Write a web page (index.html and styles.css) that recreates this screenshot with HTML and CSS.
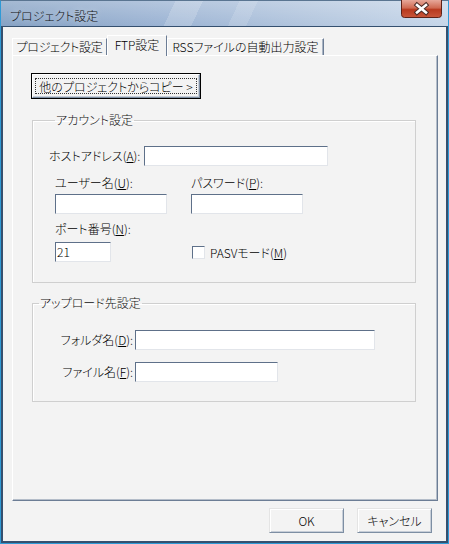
FILE: index.html
```html
<!DOCTYPE html>
<html lang="ja">
<head>
    <meta charset="UTF-8">
    <title>プロジェクト設定</title>
    <link rel="stylesheet" href="styles.css">
</head>
<body>

<div class="window">
    <div class="titlebar">
        <span class="title">プロジェクト設定</span>
        <div class="close-button">
            <svg width="41" height="18" viewBox="0 0 41 18">
                <defs>
                    <linearGradient id="closeGrad" x1="0" y1="0" x2="0" y2="1">
                        <stop offset="0" stop-color="#e7a89a"/>
                        <stop offset="0.45" stop-color="#cf6a52"/>
                        <stop offset="0.55" stop-color="#b8391e"/>
                        <stop offset="1" stop-color="#c9563a"/>
                    </linearGradient>
                </defs>
                <path d="M0.5 0 V14.5 Q0.5 17.5 3.5 17.5 H37.5 Q40.5 17.5 40.5 14.5 V0" fill="url(#closeGrad)" stroke="#5e2218"/>
                <path d="M16 5 L25 12.5 M25 5 L16 12.5" stroke="#4a2a26" stroke-width="4.6" stroke-linecap="square"/>
                <path d="M16 5 L25 12.5 M25 5 L16 12.5" stroke="#ffffff" stroke-width="2.6" stroke-linecap="square"/>
            </svg>
        </div>
    </div>

    <div class="client">
        <div class="tabs">
            <div class="tab tab-project">プロジェクト設定</div>
            <div class="tab tab-ftp selected">FTP設定</div>
            <div class="tab tab-rss">RSSファイルの自動出力設定</div>
        </div>

        <div class="panel">
            <button class="btn copy-button"><span class="focus">他のプロジェクトからコピー &gt;</span></button>

            <fieldset class="group account">
                <legend>アカウント設定</legend>
                <div class="host-row">
                    <label class="host-label">ホストアドレス(<u>A</u>):</label>
                    <div class="textbox host-input"></div>
                </div>
                <div class="account-grid">
                    <label class="field-label">ユーザー名(<u>U</u>):</label>
                    <label class="field-label">パスワード(<u>P</u>):</label>
                    <div class="textbox user-input"></div>
                    <div class="textbox pass-input"></div>
                    <label class="field-label port-label">ポート番号(<u>N</u>):</label>
                    <div></div>
                    <div class="textbox port-input">21</div>
                    <div class="check-row">
                        <span class="checkbox"></span>
                        <span>PASVモード(<u>M</u>)</span>
                    </div>
                </div>
            </fieldset>

            <fieldset class="group upload">
                <legend>アップロード先設定</legend>
                <div class="upload-grid">
                    <label class="upload-label">フォルダ名(<u>D</u>):</label>
                    <div class="textbox folder-input"></div>
                    <label class="upload-label">ファイル名(<u>F</u>):</label>
                    <div class="textbox file-input"></div>
                </div>
            </fieldset>
        </div>

        <div class="actions">
            <button class="btn dialog-button">OK</button>
            <button class="btn dialog-button">キャンセル</button>
        </div>
    </div>
</div>

</body>
</html>
```

FILE: styles.css
```css
body {
    margin: 0;
    font-family: 'Noto Sans CJK JP', 'Noto Sans', sans-serif;
    font-size: 12px;
    font-weight: 300;
    font-feature-settings: 'palt';
    color: #000;
    background: #fff;
}

.window {
    width: 449px;
    height: 544px;
    box-sizing: border-box;
    border: 1px solid #2f9ad6;
    border-top-color: #5a7591;
    background: linear-gradient(90deg, #86a2c4 0%, #9bb3d3 35%, #b3c6de 70%, #c6d6e9 100%);
    display: flex;
    flex-direction: column;
}

.titlebar {
    height: 25px;
    position: relative;
    background:
        linear-gradient(115deg, transparent 0 38%, rgba(255, 255, 255, 0.18) 38% 44%, transparent 44% 52%, rgba(255, 255, 255, 0.14) 52% 56%, transparent 56%),
        linear-gradient(180deg, rgba(255, 255, 255, 0.25), rgba(255, 255, 255, 0));
}

.title {
    position: absolute;
    left: 9px;
    top: 7px;
    line-height: 16px;
    color: #111;
    text-shadow: 0 0 6px rgba(255, 255, 255, 0.7);
}

.close-button {
    position: absolute;
    right: 6px;
    top: -1px;
    height: 18px;
}

.close-button svg {
    display: block;
}

/* client area of the dialog */
.client {
    flex: 1;
    background: #f3f3f3;
    border: 2px solid #35506f;
    border-top-width: 1px;
    display: flex;
    flex-direction: column;
}

.tabs {
    display: flex;
    align-items: flex-end;
    padding: 8px 0 0 9px;
    height: 20px;
}

.tab {
    box-sizing: border-box;
    height: 17px;
    line-height: 15px;
    text-align: center;
    background: #f3f3f3;
    border-top: 1px solid #fff;
    border-left: 1px solid #fff;
    border-right: 1px solid #6c7d95;
    white-space: nowrap;
}

.tab-project {
    width: 95px;
    letter-spacing: -0.3px;
}

.tab-ftp {
    width: 60px;
}

.tab-rss {
    width: 157px;
    box-shadow: inset -1px 0 0 #a9b4c3;
}

.tab.selected {
    height: 21px;
    line-height: 18px;
    margin-bottom: -1px;
    position: relative;
    z-index: 1;
}

.panel {
    height: 446px;
    margin: 0 8px 0 9px;
    box-sizing: border-box;
    border: 1px solid #fff;
    border-right-color: #6c7d95;
    border-bottom-color: #6c7d95;
    box-shadow: inset -1px -1px 0 #b4bdc9;
    display: flex;
    flex-direction: column;
    align-items: flex-start;
    padding: 18px 0 0 19px;
}

.btn {
    font: inherit;
    font-feature-settings: 'palt';
    color: #000;
    background: #f3f3f3;
    padding: 0;
    border: 1px solid;
    border-color: #fff #7d8ea3 #7d8ea3 #fff;
    box-shadow: inset -1px -1px 0 #c7ced8;
    border-radius: 0;
}

.copy-button {
    width: 168px;
    height: 24px;
    outline: 1px solid #000;
    outline-offset: 0;
    border: 1px solid;
    border-color: #fff #7d8ea3 #7d8ea3 #fff;
    padding: 2px;
}

.copy-button .focus {
    display: block;
    height: 16px;
    line-height: 15px;
    border: 1px dotted #333;
    box-sizing: border-box;
    white-space: nowrap;
}

/* group boxes */
.group {
    margin: 0;
    width: 384px;
    box-sizing: border-box;
    border: 1px solid #cfcfcf;
    box-shadow: inset 1px 1px 0 #fff;
    border-radius: 0;
    padding: 0;
}

.group legend {
    line-height: 14px;
    padding: 0 1px;
    margin-left: 6px;
    color: #111;
}

.account {
    margin-top: 15px;
    padding: 19px 0 20px 16px;
}

.host-row {
    display: flex;
    align-items: center;
}

.host-label {
    width: 95px;
    line-height: 14px;
}

.textbox {
    box-sizing: border-box;
    height: 20px;
    background: #fff;
    border: 1px solid;
    border-color: #5e7089 #e2e5ea #e2e5ea #5e7089;
    line-height: 18px;
    padding-left: 1px;
}

.host-input {
    width: 184px;
}

.account-grid {
    display: grid;
    grid-template-columns: 136px 112px;
    margin: 10px 0 0 6px;
}

.field-label {
    line-height: 14px;
    margin-bottom: 4px;
}

.port-label {
    margin-top: 8px;
    margin-bottom: 6px;
}

.user-input,
.pass-input {
    width: 112px;
}

.port-input {
    width: 56px;
}

.check-row {
    display: flex;
    align-items: center;
    gap: 5px;
    white-space: nowrap;
    padding-left: 1px;
}

.checkbox {
    box-sizing: border-box;
    width: 13px;
    height: 13px;
    background: #fff;
    border: 1px solid;
    border-color: #5e7089 #e2e5ea #e2e5ea #5e7089;
}

.upload {
    margin-top: 13px;
    padding: 20px 0 19px 0;
}

.upload-grid {
    display: grid;
    grid-template-columns: 100px auto;
    column-gap: 2px;
    row-gap: 12px;
    align-items: center;
    justify-items: start;
}

.upload-label {
    justify-self: end;
    line-height: 14px;
}

.folder-input {
    width: 240px;
}

.file-input {
    width: 143px;
}

.actions {
    display: flex;
    justify-content: flex-end;
    gap: 13px;
    padding: 7px 14px 0 0;
}

.dialog-button {
    width: 75px;
    height: 25px;
    border-color: #e4e4e4 #7d8ea3 #7d8ea3 #e4e4e4;
    box-shadow: inset 1px 1px 0 #fff, inset -1px -1px 0 #c7ced8;
}
```
